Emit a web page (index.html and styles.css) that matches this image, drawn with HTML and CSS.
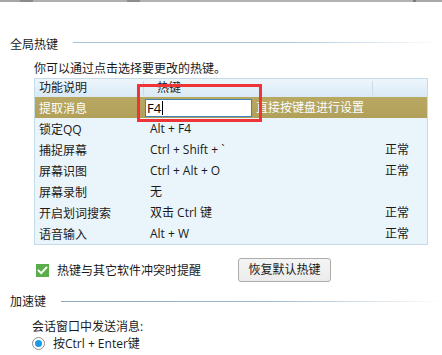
FILE: index.html
```html
<!DOCTYPE html>
<html lang="zh-CN">
<head>
<meta charset="utf-8">
<link rel="stylesheet" href="styles.css">
</head>
<body>
<div class="topbar">
  <span class="seg s1"></span><span class="seg s2"></span><span class="seg s3"></span><span class="seg s4"></span><span class="seg s5"></span><span class="seg s6"></span><span class="seg s7"></span>
</div>

<div class="section-title first">
  <span class="title-text">全局热键</span>
  <span class="title-line"></span>
</div>
<div class="desc">你可以通过点击选择要更改的热键。</div>

<div class="table">
  <div class="row head">
    <div class="cell c-name">功能说明</div>
    <div class="cell c-key">热键</div>
    <div class="cell c-status"></div>
  </div>
  <div class="row selected">
    <div class="cell c-name">提取消息</div>
    <div class="cell c-key edit-cell">
      <span class="edit-box">F4<span class="caret"></span></span>
      <span class="edit-hint">直接按键盘进行设置</span>
    </div>
    <div class="cell c-status"></div>
  </div>
  <div class="row">
    <div class="cell c-name">锁定QQ</div>
    <div class="cell c-key">Alt + F4</div>
    <div class="cell c-status"></div>
  </div>
  <div class="row">
    <div class="cell c-name">捕捉屏幕</div>
    <div class="cell c-key">Ctrl + Shift + `</div>
    <div class="cell c-status">正常</div>
  </div>
  <div class="row">
    <div class="cell c-name">屏幕识图</div>
    <div class="cell c-key">Ctrl + Alt + O</div>
    <div class="cell c-status">正常</div>
  </div>
  <div class="row">
    <div class="cell c-name">屏幕录制</div>
    <div class="cell c-key">无</div>
    <div class="cell c-status"></div>
  </div>
  <div class="row">
    <div class="cell c-name">开启划词搜索</div>
    <div class="cell c-key">双击 Ctrl 键</div>
    <div class="cell c-status">正常</div>
  </div>
  <div class="row">
    <div class="cell c-name">语音输入</div>
    <div class="cell c-key">Alt + W</div>
    <div class="cell c-status">正常</div>
  </div>
  <div class="highlight"></div>
</div>

<div class="check-row">
  <span class="checkbox">
    <svg width="13" height="13" viewBox="0 0 13 13"><path d="M2.6 6.6 L5.2 9.2 L10.4 3.6" fill="none" stroke="#fff" stroke-width="1.9" stroke-linecap="square"/></svg>
  </span>
  <span class="check-label">热键与其它软件冲突时提醒</span>
  <span class="btn">恢复默认热键</span>
</div>

<div class="section-title second">
  <span class="title-text">加速键</span>
  <span class="title-line"></span>
</div>
<div class="sub">会话窗口中发送消息:</div>
<div class="radio-row">
  <span class="radio"><span class="dot"></span></span>
  <span class="radio-label">按Ctrl + Enter键</span>
</div>
</body>
</html>
```

FILE: styles.css
```css
html, body {
  margin: 0;
  padding: 0;
  background: #ffffff;
}
body {
  width: 442px;
  height: 355px;
  overflow: hidden;
  font-family: "Open Sans", "Noto Sans CJK SC", sans-serif;
  font-size: 12px;
  color: #1a1a1a;
}

.topbar {
  display: flex;
  height: 2px;
  background: #b4b4b4;
}
.seg { display: block; height: 2px; }
.s1 { width: 20px; background: #a6a6a6; }
.s2 { width: 13px; background: #8a8a8a; }
.s3 { width: 94px; background: #b0b0b0; }
.s4 { width: 13px; background: #8d8d8d; }
.s5 { width: 273px; background: #b2b2b2; }
.s6 { width: 3px; background: #7a7a7a; }
.s7 { flex: 1; background: #a8a8a8; }

.section-title {
  display: flex;
  align-items: flex-start;
  padding-left: 10px;
  height: 17px;
  line-height: 17px;
}
.section-title.first { margin-top: 34px; }
.section-title.second { margin-top: 11px; }
.title-line {
  flex: 1;
  height: 1px;
  margin-left: 15px;
  margin-top: 6px;
  background: linear-gradient(to right, #a5c2da 0%, #a5c2da 55%, rgba(255,255,255,0) 100%);
}
.section-title.second .title-line {
  margin-top: 8px;
  background: linear-gradient(to right, #8fa8bf 0%, #a2b9cc 55%, rgba(255,255,255,0) 100%);
}

.desc {
  margin-top: 7px;
  padding-left: 34px;
  line-height: 17px;
  height: 17px;
}

.table {
  position: relative;
  margin-top: 1px;
  margin-left: 34px;
  width: 392px;
  border: 1px solid #c4dbea;
  background: #eaf5fb;
}
.row {
  display: grid;
  grid-template-columns: 108px 229px 1fr;
  height: 21px;
  line-height: 21px;
}
.row.head {
  height: 18px;
  line-height: 18px;
  background: linear-gradient(to bottom, #eef6fc 0%, #d9e9f5 100%);
}
.cell {
  white-space: nowrap;
  overflow: visible;
}
.c-name { padding-left: 4px; padding-top: 2px; line-height: 19px; }
.row.head .c-name { padding-top: 0; line-height: 18px; }
.c-key { padding-left: 7px; }
.row.head .c-key {
  padding-left: 13px;
  border-left: 1px solid #c8dbea;
  margin: 2px 0;
  line-height: 14px;
}
.row.head .c-status {
  border-left: 1px solid #c8dbea;
  margin: 2px 0;
}
.c-status { padding-left: 13px; }

.row.selected {
  background: linear-gradient(to bottom, #b8a862 0%, #b1a059 100%);
  color: #ffffff;
}
.edit-cell {
  display: flex;
  align-items: center;
  padding-left: 2px;
  position: relative;
  z-index: 1;
}
.edit-box {
  display: flex;
  align-items: center;
  box-sizing: border-box;
  width: 107px;
  height: 18px;
  line-height: 16px;
  border: 1px solid #3d84be;
  background: #ffffff;
  color: #000000;
  padding-left: 1px;
  font-size: 13px;
}
.caret {
  display: inline-block;
  width: 1px;
  height: 14px;
  background: #000;
  margin-left: 1px;
}
.edit-hint {
  margin-left: 4px;
  color: #ffffff;
}

.highlight {
  position: absolute;
  left: 102px;
  top: 5px;
  width: 119px;
  height: 32px;
  border: 3px solid #ee3437;
  pointer-events: none;
  z-index: 2;
}

.check-row {
  display: flex;
  align-items: center;
  margin-top: 13px;
  padding-left: 36px;
  height: 24px;
}
.checkbox {
  display: flex;
  align-items: center;
  justify-content: center;
  width: 13px;
  height: 13px;
  background: #5aae4a;
}
.check-label { margin-left: 8px; }
.btn {
  box-sizing: border-box;
  margin-left: 37px;
  width: 93px;
  height: 24px;
  line-height: 22px;
  text-align: center;
  border: 1px solid #acacac;
  border-radius: 3px;
  background: linear-gradient(to bottom, #f4f4f4 0%, #ececec 100%);
  color: #1a1a1a;
}

.sub {
  margin-top: 8px;
  padding-left: 32px;
  height: 17px;
  line-height: 17px;
}
.radio-row {
  display: flex;
  align-items: center;
  padding-left: 32px;
  height: 17px;
  line-height: 17px;
}
.radio {
  box-sizing: border-box;
  display: flex;
  align-items: center;
  justify-content: center;
  width: 13px;
  height: 13px;
  border: 1px solid #8f8f8f;
  border-radius: 50%;
  background: #fff;
}
.dot {
  width: 7px;
  height: 7px;
  border-radius: 50%;
  background: #1a9be9;
}
.radio-label { margin-left: 8px; }
```
